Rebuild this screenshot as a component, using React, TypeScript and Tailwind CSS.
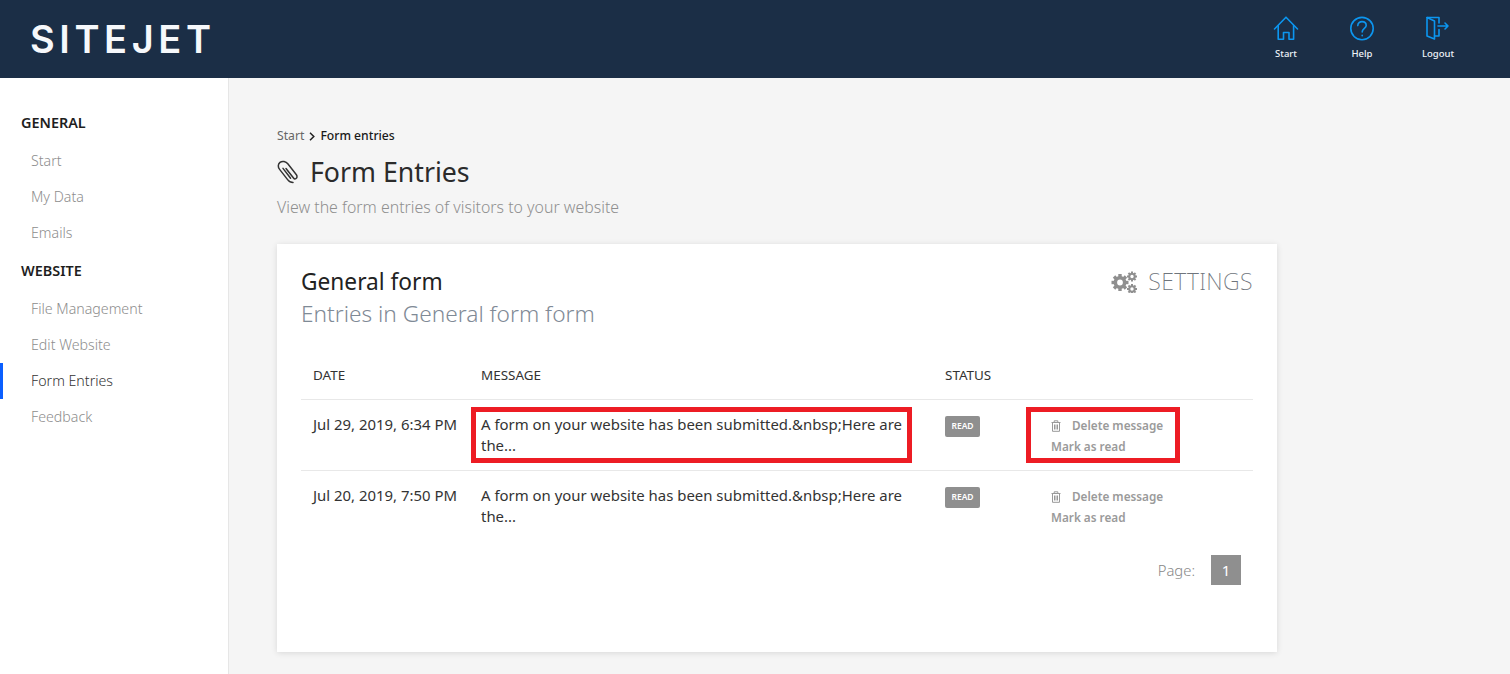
import React from "react";

const sans = "font-['Noto_Sans','Open_Sans',sans-serif]";

function HomeIcon() {
  return (
    <svg width="26" height="26" viewBox="0 0 26 26" fill="none" stroke="#0c96f0" strokeWidth="1.6" strokeLinejoin="round" strokeLinecap="round">
      <path d="M1.5 13 L13 1.2 L24.5 13" />
      <path d="M5.2 9.5 V23.2 H10.5 V16.5 H16 V23.2 H20.6 V9.5" />
    </svg>
  );
}
function HelpIcon() {
  return (
    <svg width="26" height="26" viewBox="0 0 26 26" fill="none" stroke="#0c96f0" strokeWidth="1.6" strokeLinecap="round">
      <circle cx="13" cy="12.6" r="11.2" />
      <path d="M8.8 9.6 C8.8 7 10.8 5.6 13 5.6 C15.4 5.6 17.2 7.2 17.2 9.4 C17.2 12.2 13.2 12.6 13.2 16" />
      <path d="M13.2 19.2 V19.8" />
    </svg>
  );
}
function LogoutIcon() {
  return (
    <svg width="26" height="26" viewBox="0 0 26 26" fill="none" stroke="#0c96f0" strokeWidth="1.6" strokeLinejoin="round" strokeLinecap="round">
      <path d="M2 1.5 H14 V7" />
      <path d="M14 13.5 V20 H9.5" />
      <path d="M2 1.5 V20 L9.5 23 V5 L2 1.5" />
      <path d="M13 10 H23 M20 7 L23 10 L20 13" />
    </svg>
  );
}
function ClipIcon() {
  return (
    <svg width="22" height="24" viewBox="0 0 22 24" fill="none" stroke="#333" strokeWidth="1.5" strokeLinecap="round" strokeLinejoin="round">
      <path d="M9 8.5 L16.5 18 C17.8 19.8 20.4 18.6 20 16.2 C19.9 15.6 19.6 15 19.2 14.5 L10.8 3.8 C9 1.4 5.2 0.6 3 2.4 C0.8 4.2 0.8 7.2 2.6 9.4 L10.6 19.6 C11.8 21.2 14 22.6 16 22.6" />
      <path d="M6 8.4 L13.6 18.2" />
    </svg>
  );
}
function TrashIcon() {
  return (
    <svg width="10" height="12" viewBox="0 0 10 12" fill="none" stroke="#999" strokeWidth="1">
      <path d="M0.5 2.5 H9.5 M3.2 2.3 V0.8 H6.8 V2.3" />
      <path d="M1.5 2.5 V11.3 H8.5 V2.5" />
      <path d="M3.5 4.5 V9.5 M5 4.5 V9.5 M6.5 4.5 V9.5" />
    </svg>
  );
}
function Gear({ size, cx, cy }: { size: number; cx: number; cy: number }) {
  const teeth = Array.from({ length: 8 }, (_, i) => i * 45);
  return (
    <g transform={`translate(${cx} ${cy})`}>
      {teeth.map((a) => (
        <rect key={a} x={-size * 0.2} y={-size} width={size * 0.4} height={size * 0.4} fill="#8f8f8f" transform={`rotate(${a})`} />
      ))}
      <circle r={size * 0.55} fill="none" stroke="#8f8f8f" strokeWidth={size * 0.42} />
    </g>
  );
}
function GearsIcon() {
  return (
    <svg width="27" height="24" viewBox="0 0 27 24">
      <Gear size={8.5} cx={9} cy={13.5} />
      <Gear size={5} cx={21} cy={7.5} />
      <Gear size={5} cx={21} cy={20} />
    </svg>
  );
}

function HeaderLink({ icon, label }: { icon: React.ReactNode; label: string }) {
  return (
    <div className="flex w-[76px] flex-col items-center">
      <div className="h-[26px]">{icon}</div>
      <span className={`mt-[5px] text-[9.5px] leading-[13px] font-medium text-[#eef3f8] ${sans}`}>{label}</span>
    </div>
  );
}

function SideHead({ children }: { children: React.ReactNode }) {
  return <div className="flex h-[36px] items-center pl-[21px] text-[14.4px] font-semibold text-[#1e1e1e]">{children}</div>;
}
function SideItem({ children, active }: { children: React.ReactNode; active?: boolean }) {
  return (
    <div
      className={`flex h-[36px] items-center border-l-[3px] pl-[28px] text-[14.2px] font-light ${
        active ? "border-[#0b5fff] text-[#333]" : "border-transparent text-[#8d8d8d]"
      }`}
    >
      {children}
    </div>
  );
}

function Row({ date, marked, last }: { date: string; marked?: boolean; last?: boolean }) {
  return (
    <div
      className={`grid h-[71px] grid-cols-[168px_464px_106px_1fr] text-[14.93px] text-[#333] ${
        last ? "" : "border-b border-[#e8e8e8]"
      }`}
    >
      <div className="pt-[14px] pl-[12px] leading-[21px]">{date}</div>
      <div className="relative pt-[14px] pr-[4px] pl-[12px] leading-[21px]">
        <div className="w-[430px]">A form on your website has been submitted.&amp;nbsp;Here are the...</div>
        {marked && <div className="absolute top-[7px] left-[2px] h-[56px] w-[441px] border-[5px] border-[#ed1c24]" />}
      </div>
      <div className="pt-[16px] pl-[12px]">
        <span className="flex h-[21px] w-[35px] items-center justify-center rounded-[2px] bg-[#8f8f8f] text-[8.5px] font-semibold text-white">READ</span>
      </div>
      <div className="relative pt-[15px] pl-[12px] text-[11.75px] leading-[21px] font-semibold text-[#9a9a9a]">
        <div className="flex items-center">
          <TrashIcon />
          <span className="ml-[11px]">Delete message</span>
        </div>
        <div>Mark as read</div>
        {marked && <div className="absolute top-[7px] left-[-13px] h-[56px] w-[154px] border-[5px] border-[#ed1c24]" />}
      </div>
    </div>
  );
}

export default function App() {
  return (
    <div className={`flex h-[674px] w-[1510px] flex-col overflow-hidden bg-[#f5f5f5] ${sans}`}>
      <header className="flex h-[78px] shrink-0 items-center justify-between bg-[#1b2e46] pr-[34px] pl-[30px]">
        <div className="font-['Inter',sans-serif] text-[38px] leading-none font-semibold tracking-[4.6px] text-[#f6f8fb]">SITEJET</div>
        <div className="flex pb-[2px]">
          <HeaderLink icon={<HomeIcon />} label="Start" />
          <HeaderLink icon={<HelpIcon />} label="Help" />
          <HeaderLink icon={<LogoutIcon />} label="Logout" />
        </div>
      </header>
      <div className="flex min-h-0 flex-1">
        <aside className="w-[229px] shrink-0 border-r border-[#e6e6e6] bg-white pt-[27px]">
          <SideHead>GENERAL</SideHead>
          <div className="mt-[2px]">
            <SideItem>Start</SideItem>
            <SideItem>My Data</SideItem>
            <SideItem>Emails</SideItem>
          </div>
          <div className="mt-[2px]">
            <SideHead>WEBSITE</SideHead>
          </div>
          <div className="mt-[2px]">
            <SideItem>File Management</SideItem>
            <SideItem>Edit Website</SideItem>
            <SideItem active>Form Entries</SideItem>
            <SideItem>Feedback</SideItem>
          </div>
        </aside>
        <main className="flex-1 pt-[48px] pl-[48px]">
          <div className="flex h-[20px] items-center text-[12.2px] text-[#666]">
            Start
            <svg className="mx-[5px]" width="6" height="9" viewBox="0 0 6 9" fill="none" stroke="#222" strokeWidth="1.5"><path d="M1 0.8 L4.8 4.5 L1 8.2" /></svg>
            <span className="font-medium text-[#1a1a1a]">Form entries</span>
          </div>
          <div className="mt-[8px] flex h-[36px] items-center">
            <ClipIcon />
            <h1 className="ml-[11px] text-[26.7px] leading-[36px] font-normal text-[#2b2b2b]">Form Entries</h1>
          </div>
          <p className="mt-[6px] text-[15.9px] leading-[22px] font-light text-[#8f8f8f]">View the form entries of visitors to your website</p>

          <section className="mt-[26px] h-[408px] w-[1000px] bg-white px-[24px] pt-[22px] shadow-[0_1px_6px_rgba(0,0,0,0.12)]">
            <div className="flex items-start justify-between">
              <div>
                <h2 className="text-[22.7px] leading-[32px] font-normal text-[#222]">General form</h2>
                <p className="text-[22.7px] leading-[32px] font-light text-[#7f8a96]">Entries in General form form</p>
              </div>
              <div className="flex items-center">
                <GearsIcon />
                <span className="ml-[10px] text-[23px] leading-[30px] font-extralight tracking-[0.4px] text-[#6f757c]">SETTINGS</span>
              </div>
            </div>
            <div className="mt-[23px] grid h-[47px] grid-cols-[168px_464px_106px_1fr] items-center border-b border-[#e8e8e8] pb-[1px] text-[13.45px] text-[#333]">
              <div className="pl-[12px]">DATE</div>
              <div className="pl-[12px]">MESSAGE</div>
              <div className="pl-[12px]">STATUS</div>
              <div />
            </div>
            <Row date="Jul 29, 2019, 6:34 PM" marked />
            <Row date="Jul 20, 2019, 7:50 PM" last />
            <div className="mt-[13px] flex items-center justify-end pr-[12px]">
              <span className="text-[14.8px] font-light text-[#888]">Page:</span>
              <span className="ml-[16px] flex h-[30px] w-[30px] items-center justify-center bg-[#8f8f8f] text-[15px] text-white">1</span>
            </div>
          </section>
        </main>
      </div>
    </div>
  );
}
